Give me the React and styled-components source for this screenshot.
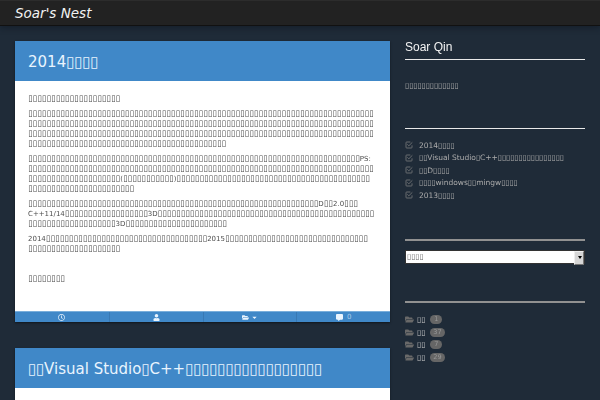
import React from "react";
import styled, { createGlobalStyle } from "styled-components";
import { FaRegClock, FaUser, FaFolderOpen, FaCommentAlt, FaCaretDown } from "react-icons/fa";

const BOX = "\u25AF";
const T = (n) => BOX.repeat(n);

const GlobalStyle = createGlobalStyle`
  html, body { margin: 0; height: 400px; overflow: hidden; background: #1f2b38; }
  body { font-family: "DejaVu Sans", sans-serif; }
  * { box-sizing: border-box; }
`;

const Navbar = styled.header`
  height: 26px;
  padding: 0 15px;
  display: flex;
  align-items: center;
  background: #222;
  border-top: 1px solid #2c2c2c;
  border-bottom: 1px solid #111;
  box-shadow: 0 2px 6px rgba(10, 18, 28, 0.45);
`;
const Brand = styled.a`
  color: #f2f2f2;
  font-size: 13.5px;
  font-style: italic;
`;
const Layout = styled.div`
  display: grid;
  grid-template-columns: 375px 180px;
  column-gap: 15px;
  padding: 15px 15px 0;
`;
const Main = styled.main`
  display: flex;
  flex-direction: column;
  gap: 26px;
`;
const Post = styled.article`
  box-shadow: 0 1px 2px rgba(0, 0, 0, 0.5);
`;
const PostHeader = styled.h1`
  margin: 0;
  height: 40px;
  padding: 2px 13px 0;
  display: block;
  background: #4088c8;
  color: #e9f4fe;
  font-size: 15px;
  line-height: 38px;
  font-weight: 400;
  white-space: nowrap;
`;
const TitleBox = styled.span`
  letter-spacing: -0.2px;
`;
const PostBody = styled.div`
  height: ${(p) => p.$height}px;
  padding: 13px 13px 0;
  background: #fff;
  color: #4d4d4d;
  font-size: 7px;
  line-height: 10px;
  filter: grayscale(1);
`;
const Para = styled.p`
  margin: 0 0 5px;
  min-height: 10px;
  white-space: nowrap;
`;
const BodyBox = styled.span`
  font-size: 8.4px;
  line-height: 0;
`;
const PostFooter = styled.footer`
  height: 11px;
  display: grid;
  grid-template-columns: repeat(4, 1fr);
  background: #4088c8;
  border-top: 1px solid #79aedb;
`;
const Meta = styled.div`
  display: flex;
  align-items: center;
  justify-content: center;
  gap: 2px;
  color: #e9f4fe;
  font-size: 7px;
  border-left: ${(p) => (p.$first ? "none" : "1px solid #3879b4")};
`;
const Count = styled.span`
  margin-left: 2px;
  color: #a8cdec;
`;
const Sidebar = styled.aside`
  color: #a5acb3;
  font-size: 7.5px;
  filter: grayscale(1);
`;
const WidgetTitle = styled.h2`
  margin: 0;
  color: #f2f2f2;
  font: 400 12px/12px "Liberation Sans", sans-serif;
`;
const Rule = styled.hr`
  margin: ${(p) => p.$top}px 0 0;
  border: 0;
  height: ${(p) => (p.$thick ? 2 : 1)}px;
  background: ${(p) => (p.$thick ? "#84949f" : "#e6e9eb")};
`;
const Tagline = styled.div`
  margin-top: 21px;
  line-height: 10px;
`;
const RecentList = styled.ul`
  list-style: none;
  margin: 10px 0 0;
  padding: 0;
`;
const RecentItem = styled.li`
  height: 12.5px;
  display: flex;
  align-items: center;
  gap: 6px;
  white-space: nowrap;
`;
const CheckIcon = styled.svg`
  width: 8px;
  height: 8px;
  flex: none;
  fill: none;
  stroke: #7b858e;
  stroke-width: 1.1;
`;
const SelectWrap = styled.div`
  position: relative;
  height: 14px;
  margin-top: 9px;
  &::before {
    content: "";
    position: absolute;
    top: 1px;
    right: 1px;
    width: 8px;
    height: 12px;
    background: #d9d6d0;
    border: 1px solid #f0eeea;
    border-right-color: #77746e;
    border-bottom-color: #77746e;
    pointer-events: none;
  }
  &::after {
    content: "";
    position: absolute;
    top: 6px;
    right: 3px;
    border: 2px solid transparent;
    border-top: 3px solid #000;
    border-bottom: 0;
    pointer-events: none;
  }
`;
const ArchiveSelect = styled.select`
  display: block;
  appearance: none;
  width: 180px;
  height: 14px;
  padding: 0 1px;
  font: 7.5px "DejaVu Sans", sans-serif;
  color: #666;
  background: #fff;
  border: 1px solid #333;
  border-radius: 0;
`;
const CategoryList = styled.ul`
  list-style: none;
  margin: 11px 0 0;
  padding: 0;
`;
const CategoryItem = styled.li`
  height: 12.5px;
  display: flex;
  align-items: center;
  gap: 3px;
  white-space: nowrap;
  color: #c3c8cc;
  svg { color: #626a70; font-size: 9px; }
`;
const Badge = styled.span`
  min-width: 12px;
  margin-left: 2px;
  padding: 0 3px;
  height: 9px;
  border-radius: 5px;
  background: #666;
  color: #999;
  font-size: 6.5px;
  line-height: 9px;
  text-align: center;
`;

// Splits a line into runs of box glyphs and other text, so each run can take its own size.
function Rich({ text, as: Wrap }) {
  return text.split(new RegExp(`(${BOX}+)`)).map((part, i) =>
    part.startsWith(BOX) ? <Wrap key={i}>{part}</Wrap> : part
  );
}

const paragraphs = [
  [T(20)],
  [T(75), T(75), T(75), T(43)],
  [T(72) + "PS:", T(75), T(20) + "(" + T(11) + ")" + T(42), T(23)],
  [T(63) + "D" + T(2) + "2.0" + T(3), "C++11/14" + T(18) + "3D" + T(47), T(19) + "3D" + T(22)],
  ["2014" + T(35) + "2015" + T(31), T(20)],
  [],
  [T(8)],
];
const recent = [
  "2014" + T(4),
  T(2) + "Visual Studio" + T(1) + "C++" + T(16),
  T(2) + "D" + T(4),
  T(4) + "windows" + T(2) + "mingw" + T(4),
  "2013" + T(4),
];
const categories = [1, 37, 7, 29];

export default function App() {
  return (
    <>
      <GlobalStyle />
      <Navbar><Brand>Soar's Nest</Brand></Navbar>
      <Layout>
        <Main>
          <Post>
            <PostHeader><Rich text={"2014" + T(4)} as={TitleBox} /></PostHeader>
            <PostBody $height={230}>
              {paragraphs.map((lines, i) => (
                <Para key={i}>
                  {lines.map((l, j) => (
                    <React.Fragment key={j}>{j > 0 && <br />}<Rich text={l} as={BodyBox} /></React.Fragment>
                  ))}
                </Para>
              ))}
            </PostBody>
            <PostFooter>
              <Meta $first><FaRegClock /></Meta>
              <Meta><FaUser /></Meta>
              <Meta><FaFolderOpen /><FaCaretDown /></Meta>
              <Meta><FaCommentAlt /><Count>0</Count></Meta>
            </PostFooter>
          </Post>
          <Post>
            <PostHeader><Rich text={T(2) + "Visual Studio" + T(1) + "C++" + T(17)} as={TitleBox} /></PostHeader>
            <PostBody $height={12} />
          </Post>
        </Main>
        <Sidebar>
          <WidgetTitle>Soar Qin</WidgetTitle>
          <Rule $top={6} />
          <Tagline>{T(13)}</Tagline>
          <Rule $top={37} />
          <RecentList>
            {recent.map((r, i) => (
              <RecentItem key={i}>
                <CheckIcon viewBox="0 0 12 12">
                  <path d="M8 1.5H2.5a1 1 0 0 0-1 1v7a1 1 0 0 0 1 1h7a1 1 0 0 0 1-1V6.5" />
                  <path d="M3.5 5l2.2 2.2L11 2" />
                </CheckIcon>
                {r}
              </RecentItem>
            ))}
          </RecentList>
          <Rule $thick $top={37} />
          <SelectWrap>
            <ArchiveSelect defaultValue="a"><option value="a">{T(4)}</option></ArchiveSelect>
          </SelectWrap>
          <Rule $thick $top={37} />
          <CategoryList>
            {categories.map((c, i) => (
              <CategoryItem key={i}><FaFolderOpen />{T(2)}<Badge>{c}</Badge></CategoryItem>
            ))}
          </CategoryList>
        </Sidebar>
      </Layout>
    </>
  );
}
